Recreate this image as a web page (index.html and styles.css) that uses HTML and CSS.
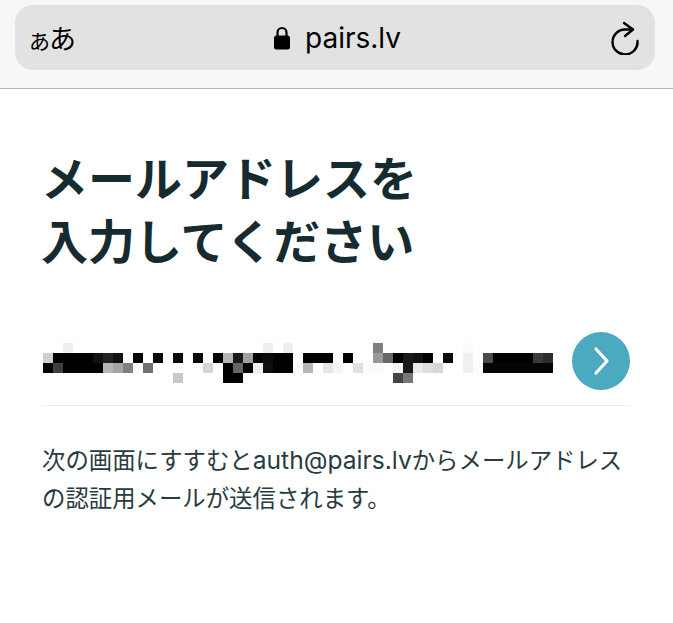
FILE: index.html

```html
<!DOCTYPE html>
<html lang="ja">
<head>
  <meta charset="UTF-8">
  <meta name="viewport" content="width=device-width, initial-scale=1.0">
  <title>メールアドレスを入力してください</title>
  <link rel="stylesheet" href="styles.css">
</head>
<body>
  <header class="toolbar">
    <div class="address-bar">
      <span class="text-size"><span class="text-size-small">あ</span>あ</span>
      <span class="site">
        <svg class="lock" width="18" height="24" viewBox="0 0 18 24">
          <path d="M4.500 11V6.500a4.500 4.500 0 0 1 9 0V11" fill="none" stroke="#000" stroke-width="2.200"/>
          <rect x="1" y="9.500" width="16" height="14" rx="2.500" fill="#000"/>
        </svg>
        <span class="site-name">pairs.lv</span>
      </span>
      <svg class="reload" width="30" height="34" viewBox="0 0 30 34">
        <path d="M23 8.500H15A12.500 12.500 0 1 0 27.500 20" fill="none" stroke="#000" stroke-width="2.400" stroke-linecap="round"/>
        <path d="M14 2L23 8.500L15 15" fill="none" stroke="#000" stroke-width="2.400" stroke-linecap="round" stroke-linejoin="round"/>
      </svg>
    </div>
  </header>

  <main class="content">
    <h1 class="title">メールアドレスを<br>入力してください</h1>

    <div class="email-row">
      <svg class="mosaic" width="510" height="40" viewBox="0 0 51 4" shape-rendering="crispEdges" role="img" aria-label="モザイク処理されたメールアドレス">
        <rect x="2" y="0" width="1" height="1" fill="#eee"/>
        <rect x="22" y="0" width="1" height="1" fill="#eee"/>
        <rect x="24" y="0" width="1" height="1" fill="#eee"/>
        <rect x="33" y="0" width="1" height="1" fill="#808080"/>
        <rect x="42" y="0" width="1" height="1" fill="#fbfbfb"/>

        <rect x="0" y="1" width="1" height="1" fill="#d0d0d0"/>
        <rect x="1" y="1" width="4" height="1" fill="#000"/>
        <rect x="5" y="1" width="1" height="1" fill="#111"/>
        <rect x="6" y="1" width="1" height="1" fill="#222"/>
        <rect x="7" y="1" width="1" height="1" fill="#111"/>
        <rect x="8" y="1" width="1" height="1" fill="#fcfcfc"/>
        <rect x="9" y="1" width="1" height="1" fill="#000"/>
        <rect x="11" y="1" width="1" height="1" fill="#0a0a0a"/>
        <rect x="13" y="1" width="1" height="1" fill="#0a0a0a"/>
        <rect x="15" y="1" width="1" height="1" fill="#0a0a0a"/>
        <rect x="17" y="1" width="1" height="1" fill="#000"/>
        <rect x="18" y="1" width="1" height="1" fill="#b5b5b5"/>
        <rect x="19" y="1" width="1" height="1" fill="#1a1a1a"/>
        <rect x="20" y="1" width="1" height="1" fill="#a0a0a0"/>
        <rect x="21" y="1" width="1" height="1" fill="#000"/>
        <rect x="22" y="1" width="1" height="1" fill="#0a0a0a"/>
        <rect x="23" y="1" width="2" height="1" fill="#000"/>
        <rect x="26" y="1" width="3" height="1" fill="#000"/>
        <rect x="30" y="1" width="1" height="1" fill="#000"/>
        <rect x="33" y="1" width="1" height="1" fill="#999"/>
        <rect x="34" y="1" width="1" height="1" fill="#666"/>
        <rect x="35" y="1" width="1" height="1" fill="#000"/>
        <rect x="36" y="1" width="1" height="1" fill="#181818"/>
        <rect x="37" y="1" width="1" height="1" fill="#111"/>
        <rect x="38" y="1" width="1" height="1" fill="#000"/>
        <rect x="40" y="1" width="1" height="1" fill="#0a0a0a"/>
        <rect x="42" y="1" width="1" height="1" fill="#f0f0f0"/>
        <rect x="44" y="1" width="1" height="1" fill="#4a4a4a"/>
        <rect x="45" y="1" width="4" height="1" fill="#000"/>
        <rect x="49" y="1" width="1" height="1" fill="#3a3a3a"/>
        <rect x="50" y="1" width="1" height="1" fill="#2d2d2d"/>

        <rect x="0" y="2" width="1" height="1" fill="#000"/>
        <rect x="1" y="2" width="1" height="1" fill="#3e3e3e"/>
        <rect x="2" y="2" width="4" height="1" fill="#000"/>
        <rect x="6" y="2" width="1" height="1" fill="#b5b5b5"/>
        <rect x="7" y="2" width="1" height="1" fill="#a5a5a5"/>
        <rect x="8" y="2" width="1" height="1" fill="#808080"/>
        <rect x="10" y="2" width="1" height="1" fill="#707070"/>
        <rect x="16" y="2" width="1" height="1" fill="#d5d5d5"/>
        <rect x="18" y="2" width="1" height="1" fill="#000"/>
        <rect x="19" y="2" width="1" height="1" fill="#666"/>
        <rect x="20" y="2" width="1" height="1" fill="#000"/>
        <rect x="21" y="2" width="1" height="1" fill="#eee"/>
        <rect x="22" y="2" width="1" height="1" fill="#0e0e0e"/>
        <rect x="23" y="2" width="2" height="1" fill="#000"/>
        <rect x="25" y="2" width="1" height="1" fill="#fcfcfc"/>
        <rect x="26" y="2" width="1" height="1" fill="#b5b5b5"/>
        <rect x="28" y="2" width="1" height="1" fill="#e5e5e5"/>
        <rect x="29" y="2" width="1" height="1" fill="#f5f5f5"/>
        <rect x="31" y="2" width="1" height="1" fill="#e0e0e0"/>
        <rect x="32" y="2" width="2" height="1" fill="#fafafa"/>
        <rect x="35" y="2" width="1" height="1" fill="#f3f3f3"/>
        <rect x="36" y="2" width="1" height="1" fill="#181818"/>
        <rect x="37" y="2" width="1" height="1" fill="#e8e8e8"/>
        <rect x="38" y="2" width="1" height="1" fill="#ddd"/>
        <rect x="39" y="2" width="1" height="1" fill="#d5d5d5"/>
        <rect x="42" y="2" width="1" height="1" fill="#f0f0f0"/>
        <rect x="43" y="2" width="1" height="1" fill="#fcfcfc"/>
        <rect x="44" y="2" width="7" height="1" fill="#050505"/>

        <rect x="13" y="3" width="1" height="1" fill="#c8c8c8"/>
        <rect x="18" y="3" width="2" height="1" fill="#000"/>
        <rect x="35" y="3" width="1" height="1" fill="#444"/>
        <rect x="36" y="3" width="1" height="1" fill="#777"/>
      </svg>
      <button class="next" type="button" aria-label="次へ">
        <svg width="20" height="30" viewBox="0 0 20 30">
          <path d="M4 3L15 15L4 27" fill="none" stroke="#fff" stroke-width="3.200" stroke-linecap="round" stroke-linejoin="round"/>
        </svg>
      </button>
    </div>

    <p class="note">次の画面にすすむと<span class="note-address">auth@pairs.lv</span>からメールアドレスの認証用メールが送信されます。</p>
  </main>
</body>
</html>
```

FILE: styles.css

```css
body { margin: 0; background: #fff; font-family: "Noto Sans CJK JP", "Noto Sans", sans-serif; color: #152b30; }

.toolbar { background: #f7f7f7; padding: 5px 18px 18px 15px; border-bottom: 1px solid #b7b7b7; }
.address-bar { display: grid; grid-template-columns: 1fr auto 1fr; align-items: center; height: 65px; padding: 0 15px 0 14px; box-sizing: border-box; background: #e2e2e2; border-radius: 18px; color: #000; }
.text-size { font-size: 27px; line-height: 1; letter-spacing: -1px; }
.text-size-small { font-size: 21px; }
.site { display: flex; align-items: center; gap: 14px; margin-left: 5px; }
.site-name { font-family: Inter, Roboto, sans-serif; font-size: 28px; line-height: 1; }
.lock { display: block; }
.reload { display: block; justify-self: end; }

.content { padding: 55px 43px 0 41px; }
.title { margin: 0; font-size: 47px; line-height: 63px; font-weight: 700; }
.email-row { display: flex; align-items: center; justify-content: space-between; height: 88px; margin: 47px 0 0 1px; padding-left: 1px; border-bottom: 1px solid #e8efee; }
.mosaic { display: block; margin-top: 4px; }
.next { display: flex; align-items: center; justify-content: center; width: 58px; height: 58px; padding: 0 0 0 2px; border: none; border-radius: 50%; background: #4baabf; cursor: pointer; }
.note { margin: 34px 0 0 1px; font-size: 23.4px; line-height: 38px; color: #2a3b3f; }
.note-address { font-family: Inter, sans-serif; font-size: 24.6px; line-height: 1; }
```
